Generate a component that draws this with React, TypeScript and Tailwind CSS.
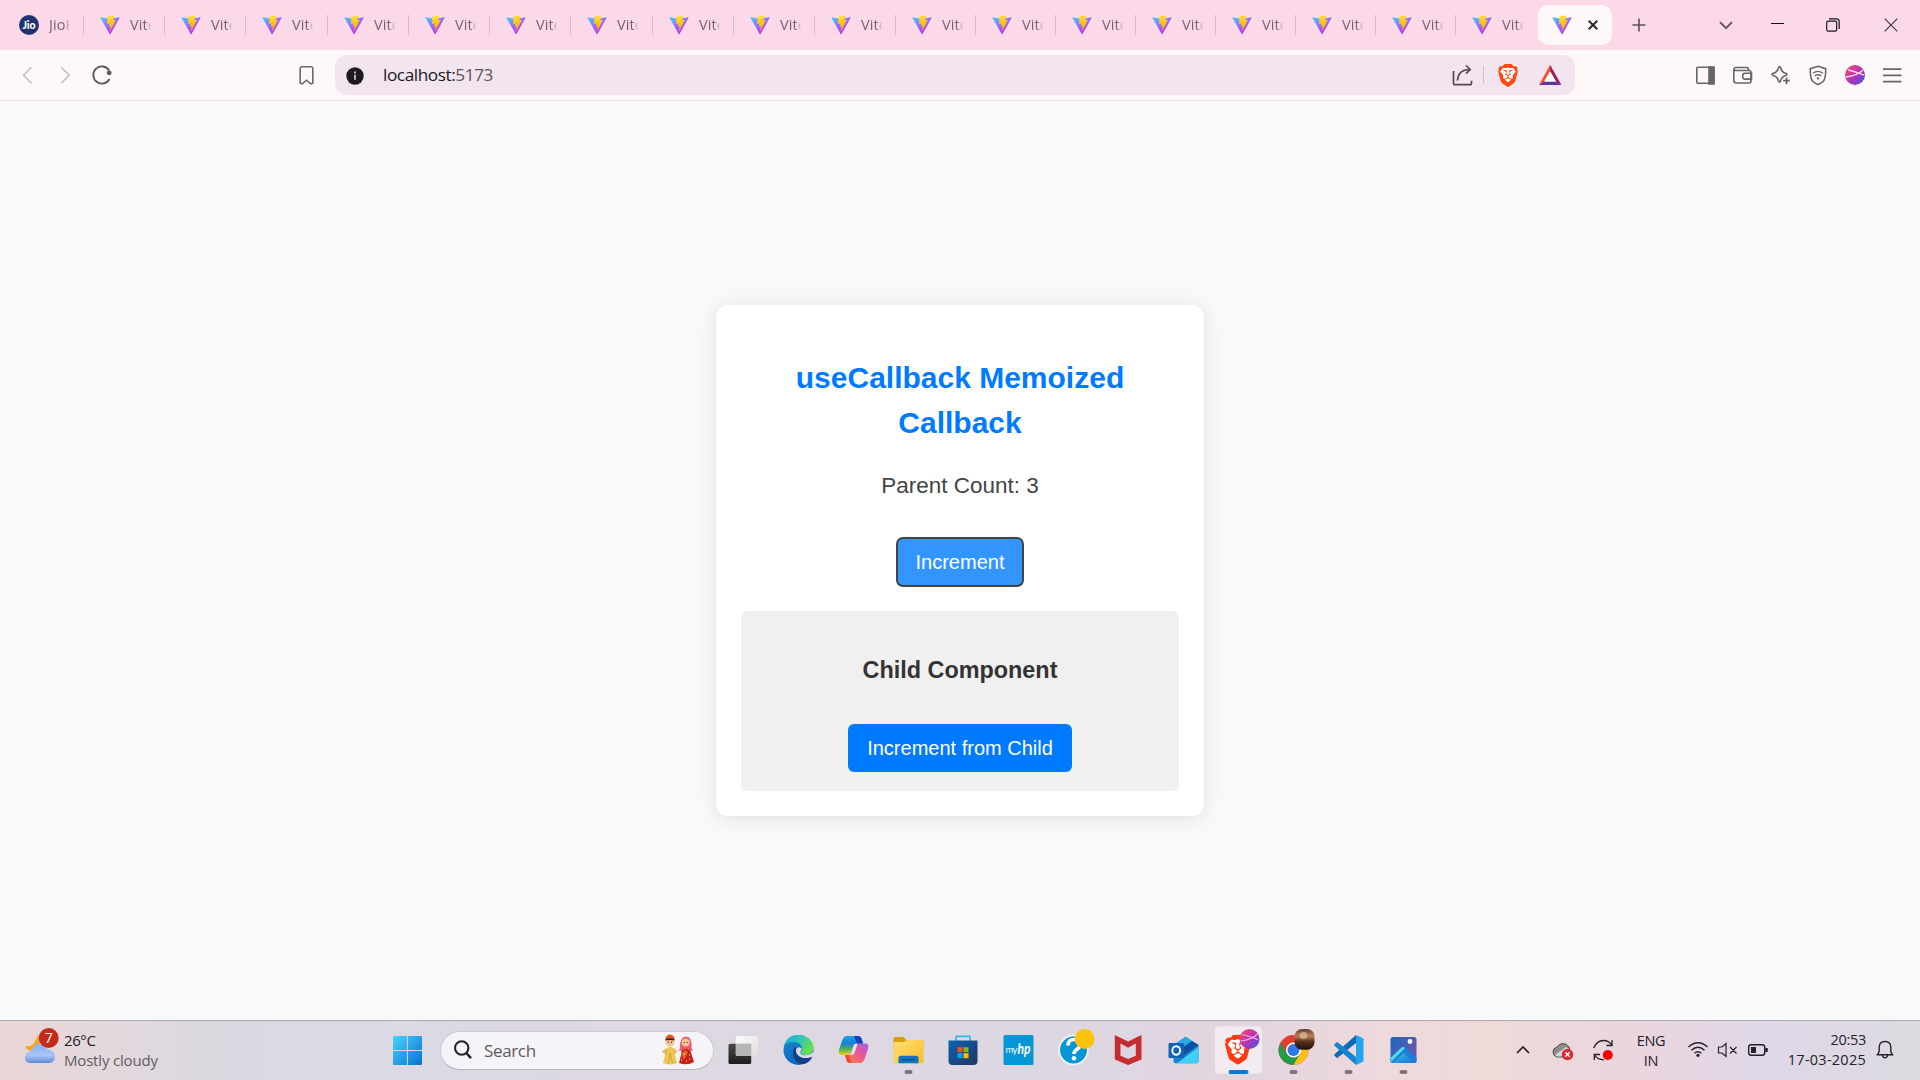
import React from "react";
import { SiBrave } from "react-icons/si";

const ui = "font-['Open_Sans','Noto_Sans',sans-serif]";

function Gradients() {
  return (
    <svg width="0" height="0" className="absolute">
      <defs>
        <linearGradient id="viteA" x1="6" y1="33" x2="235" y2="344" gradientUnits="userSpaceOnUse">
          <stop stopColor="#41D1FF" />
          <stop offset="1" stopColor="#BD34FE" />
        </linearGradient>
        <linearGradient id="viteB" x1="194.651" y1="8.818" x2="236.076" y2="292.989" gradientUnits="userSpaceOnUse">
          <stop stopColor="#FFEA83" />
          <stop offset=".083" stopColor="#FFDD35" />
          <stop offset="1" stopColor="#FFA800" />
        </linearGradient>
        <linearGradient id="orb" x1="0" y1="0" x2="1" y2="1">
          <stop stopColor="#ff4c5c" />
          <stop offset=".5" stopColor="#b933b5" />
          <stop offset="1" stopColor="#3b54e6" />
        </linearGradient>
      </defs>
    </svg>
  );
}

function Vite() {
  return (
    <svg width="20" height="20" viewBox="0 0 410 404" className="shrink-0">
      <path fill="url(#viteA)" d="M399.641 59.5246L215.643 388.545C211.844 395.338 202.084 395.378 198.228 388.618L10.5817 59.5563C6.38087 52.1896 12.6802 43.2665 21.0281 44.7586L205.223 77.6824C206.398 77.8924 207.601 77.8904 208.776 77.6763L389.119 44.8058C397.439 43.2894 403.768 52.1434 399.641 59.5246Z" />
      <path fill="url(#viteB)" d="M292.965 1.5744L156.801 28.2552C154.563 28.6937 152.906 30.5903 152.771 32.8664L144.395 174.33C144.198 177.662 147.258 180.248 150.51 179.498L188.42 170.749C191.967 169.931 195.172 173.055 194.443 176.622L183.18 231.775C182.422 235.487 185.907 238.661 189.532 237.56L212.947 230.446C216.577 229.344 220.065 232.527 219.297 236.242L201.398 322.875C200.278 328.294 207.486 331.249 210.492 326.603L212.5 323.5L323.454 102.072C325.312 98.3645 322.108 94.137 318.036 94.9228L279.014 102.454C275.347 103.161 272.227 99.746 273.262 96.1583L298.731 7.86689C299.767 4.27314 296.636 0.855181 292.965 1.5744Z" />
    </svg>
  );
}

const tabWidths = [81, 81, 81, 82, 81, 81, 81, 82, 81, 81, 81, 80, 80, 80, 80, 80, 80, 80, 82];

function TabStrip() {
  return (
    <div className={`flex h-[50px] items-center bg-[#fbd9e9] pl-[3px] ${ui}`}>
      {tabWidths.map((w, i) => (
        <div key={i} style={{ width: w }} className="flex h-5 shrink-0 items-center pl-4">
          {i === 0 ? (
            <div className="flex size-5 shrink-0 items-center justify-center rounded-full bg-[#20326f] font-['Lato',sans-serif] text-[10.5px] font-black text-white">
              <span className="leading-none">Jio</span>
            </div>
          ) : (
            <Vite />
          )}
          <div className="ml-[10px] w-[22px] overflow-hidden text-[14.5px] leading-5 tracking-[0.1px] whitespace-nowrap text-[#75646e] [mask-image:linear-gradient(to_right,#000_68%,transparent_98%)]">
            {i === 0 ? "JioH" : "Vite"}
          </div>
          {i < 18 && <div className="ml-auto h-5 w-px bg-[#d8bccb]" />}
        </div>
      ))}
      <div className="flex h-10 w-[74px] shrink-0 items-center rounded-[10px] bg-[#fff8f9] pl-[14px]">
        <Vite />
        <svg width="12" height="12" viewBox="0 0 12 12" className="ml-[14.5px]">
          <path d="M1.7 1.7l8.6 8.6M10.3 1.7l-8.6 8.6" stroke="#2c2a2e" strokeWidth="2" />
        </svg>
      </div>
      <svg width="14" height="14" viewBox="0 0 14 14" className="ml-[20px] shrink-0">
        <path d="M7 .5v13M.5 7h13" stroke="#5c5057" strokeWidth="1.6" />
      </svg>
      <svg width="14" height="9" viewBox="0 0 14 9" className="ml-[73px] shrink-0">
        <path d="M1 1.2l6 6 6-6" fill="none" stroke="#5c5459" strokeWidth="1.9" />
      </svg>
      <div className="-mt-[3px] ml-[38px] h-[1.5px] w-[13px] bg-[#111]" />
      <svg width="14" height="14" viewBox="0 0 14 14" className="ml-[42px] shrink-0" fill="none" stroke="#19161a" strokeWidth="1.2">
        <rect x=".7" y="3.2" width="10" height="10" rx="1.6" />
        <path d="M3 .8h7.2q3 0 3 3V11" />
      </svg>
      <svg width="14" height="14" viewBox="0 0 14 14" className="ml-[44px] shrink-0">
        <path d="M.7.7l12.6 12.6M13.3.7L.7 13.3" stroke="#3a3237" strokeWidth="1.1" />
      </svg>
    </div>
  );
}

function Toolbar() {
  return (
    <div className={`flex h-[51px] items-center border-b border-[#f3dde2] bg-[#fff8f8] ${ui}`}>
      <svg width="335" height="50" viewBox="0 0 335 50" fill="none" strokeWidth="1.6" className="shrink-0">
        <path d="M31.5 17.2l-8 8 8 8M61.2 17.2l8 8-8 8" stroke="#c2bdc0" />
        <path d="M109.2 20.5A8.6 8.6 0 1 0 109.5 29" stroke="#55575c" strokeWidth="1.8" />
        <circle cx="109.2" cy="22.8" r="2.4" fill="#55575c" />
        <path d="M302 16.7h9q1.8 0 1.8 1.8v14.7l-2 .6-4.3-3.6-4.3 3.6-2-.6V18.5q0-1.8 1.8-1.8z" stroke="#676a70" />
      </svg>
      <div className="flex h-10 w-[1240px] shrink-0 items-center rounded-[12px] bg-[#f2e5ef] pl-[11px]">
        <svg width="18" height="18" viewBox="0 0 18 18" className="mt-[2px]">
          <circle cx="9" cy="9" r="8.7" fill="#1f1a1e" />
          <path d="M9 7.8v5M9 4.6v1.8" stroke="#d9ced6" strokeWidth="1.7" />
        </svg>
        <div className="ml-[19px] text-[17.2px] leading-10 tracking-[-0.42px] text-[#201a1e]">
          localhost:<span className="text-[#5d535b]">5173</span>
        </div>
        <svg width="130" height="40" viewBox="0 0 130 40" fill="none" className="ml-auto">
          <g stroke="#55484f" strokeWidth="1.7">
            <path d="M8.5 16v12q0 1.7 1.7 1.7h14.6q1.7 0 1.7-1.7v-2.3" />
            <path d="M12.500 25.5c.5-7.5 4-11 12-11M21 10.5l4.200 4-4.200 4.200" />
          </g>
          <path d="M38.500 11v18" stroke="#cdbfc9" />
          <g transform="translate(53 9)">
            <path d="M3 2h14l2 5-3 12-6 3.500L4 19 1 7z" fill="#fff" />
            <SiBrave x={-1.5} y={0} width={23} height={23} size={23} color="#fb4b12" />
          </g>
          <path d="M105.100 9.800L94 30l5-3 6.100-10.800z" fill="#ff4b2b" />
          <path d="M105.100 9.800L116.400 30l-5-3-6.300-10.800z" fill="#9c1f63" />
          <path d="M94 30h22.400l-5-3.500H99z" fill="#63329a" />
          <path d="M105.100 16.200l5.700 10.300H99.300z" fill="#fff" />
        </svg>
      </div>
      <svg width="345" height="50" viewBox="0 0 345 50" fill="none" stroke="#63666b" strokeWidth="1.6" className="shrink-0">
        <rect x="121.800" y="17.300" width="17" height="16" rx="1" />
        <path d="M134 17h5v17h-5z" fill="#63666b" />
        <path d="M174 20.500h-14.500q-1.200-3 1.500-3h10.500q2.300 0 2.300 3zM174 20.500q2 0 2 2v8.500q0 2-2 2h-12.500q-2.700 0-2.700-2.700V19" />
        <path d="M176.500 23.300H170q-2.300 0-2.300 2.300v1.200q0 2.300 2.300 2.300h6.500z" />
        <path d="M204.500 16.500q.8 0 1 1 1 4.800 5.800 6 1.700.8 0 1.700-4.800 1.200-5.800 6-.9 1.900-1.900 0-1-4.800-5.800-6-1.900-.9 0-1.700 4.800-1.200 5.800-6 .2-1 .9-1z" />
        <path d="M211.500 27.500v6.500M208.200 30.700h6.600" strokeWidth="1.800" />
        <path d="M243 16.300l7.700 2.400q.3 10-2.600 12.800-2 1.800-5.100 3-3.100-1.200-5.100-3-2.900-2.800-2.600-12.800z" />
        <path d="M238 23.200q5-3.600 10 0M239.700 26q3.300-2.500 6.600 0" strokeWidth="1.400" />
        <circle cx="243" cy="28.400" r=".8" fill="#63666b" strokeWidth="1" />
        <circle cx="280" cy="25" r="10" fill="url(#orb)" stroke="none" />
        <path d="M271 27c8-1 14-4 17-7M273 20c6 1 12 4 16 5" stroke="#ffd7ec" strokeWidth="1.300" />
        <path d="M308 19.200h18.500M308 25.300h18.500M308 31.700h18.500" strokeWidth="1.700" />
      </svg>
    </div>
  );
}

function Card() {
  return (
    <div className="flex h-[919px] justify-center bg-[#f8f9fb] pt-[204px] font-['Liberation_Sans',Arial,sans-serif]">
      <div className="h-[511px] w-[488px] rounded-[12px] bg-white px-[25px] pt-[50px] text-center shadow-[0_2px_19px_rgba(0,0,0,0.1)]">
        <h2 className="text-[30px] leading-[45px] font-bold text-[#007bff]">
          useCallback Memoized
          <br />
          Callback
        </h2>
        <p className="mt-[24px] text-[22.5px] leading-[34px] text-[#444]">Parent Count: 3</p>
        <button className="mx-auto mt-[34px] block h-[50px] w-[128px] rounded-[7px] border-2 border-[#444] bg-[#3395ff] text-[20px] text-white">
          Increment
        </button>
        <div className="mt-[24px] h-[180px] rounded-[6px] bg-[#f0f0f0] pt-[42px]">
          <h3 className="text-[23.4px] leading-[35px] font-bold text-[#333]">Child Component</h3>
          <button className="mx-auto mt-[36px] block h-12 w-[224px] rounded-[6px] bg-[#007bff] text-[20px] text-white">
            Increment from Child
          </button>
        </div>
      </div>
    </div>
  );
}

function Slot({ children }: { children: React.ReactNode }) {
  return (
    <svg width="55" height="60" viewBox="0 0 55 60" className="shrink-0">
      {children}
    </svg>
  );
}

const dot = <rect x="23.500" y="50" width="8" height="4" rx="2" fill="#7d777d" />;

function Apps() {
  return (
    <div className="ml-[2.5px] flex">
      <Slot>
        <defs>
          <linearGradient id="tvA" x1="0" y1="0" x2="0" y2="1"><stop stopColor="#4a4a48" /><stop offset="1" stopColor="#1d1d1b" /></linearGradient>
          <linearGradient id="tvB" x1="0" y1="0" x2="1" y2="1"><stop stopColor="#fff" /><stop offset="1" stopColor="#dedede" /></linearGradient>
        </defs>
        <rect x="12.500" y="23.700" width="22.700" height="20.300" rx="1.500" fill="url(#tvA)" />
        <rect x="19.800" y="16" width="22.400" height="20" rx="1.500" fill="url(#tvB)" fillOpacity=".9" />
        <path d="M19.800 23.700h15.400V36h-14q-1.400 0-1.400-1.400z" fill="#b5b5b5" />
      </Slot>
      <Slot>
        <defs>
          <linearGradient id="edA" x1="0" y1="0" x2="1" y2=".4"><stop stopColor="#1ea6d8" /><stop offset=".5" stopColor="#2cc3c0" /><stop offset="1" stopColor="#66e04f" /></linearGradient>
          <linearGradient id="edB" x1="0" y1="0" x2=".5" y2="1"><stop stopColor="#1489cf" /><stop offset="1" stopColor="#0e66bd" /></linearGradient>
        </defs>
        <circle cx="27.500" cy="30" r="15" fill="url(#edB)" />
        <path d="M13 26C15 18 21 15 27.500 15c8.500 0 15 6 15 12.500 0 5-4 7.500-8 7.500-3.500 0-5-1.500-5-2.500s1.500-1.500 1.500-4c0-4-4-6.500-8.500-6.500-4 0-7.500 1.500-9.500 4z" fill="url(#edA)" />
        <path d="M23.500 27c-4 5-.5 17.500 9 17 3.500-.5 7-3.500 8.500-6.500.3-.8-.3-1-.9-.7-8 4-17-1-14.300-8z" fill="#123f86" />
        <path d="M25 29.500c1-2.500 4-3 5.500-1-.2 2.200-1.300 3-1.300 4 0 1.500 2 2.700 5 2.700 3.500 0 6.500-1.200 8.300-4.200v5c-8 4.500-18 1.500-17.500-6.500z" fill="#dcd7e2" />
        <path d="M40.500 37c1-.6 1.600-1.800 2-3v5z" fill="#dcd7e2" />
      </Slot>
      <Slot>
        <defs>
          <linearGradient id="coA" x1="0" y1="0" x2="0" y2="1"><stop stopColor="#1ba3e8" /><stop offset=".4" stopColor="#1b7fd6" /><stop offset=".7" stopColor="#52b455" /><stop offset="1" stopColor="#f0cf1c" /></linearGradient>
          <linearGradient id="coB" x1="1" y1="0" x2="0" y2="1"><stop stopColor="#a55af0" /><stop offset=".5" stopColor="#ed5a8c" /><stop offset="1" stopColor="#fb8a2f" /></linearGradient>
        </defs>
        <path d="M21 16h11q3 0 4 4l1 3.500h-6q-3 0-4 3.500l-2 5q-1 3-4 3h-5q-4.500 0-3-5.500l3.500-10Q17.800 16 21 16z" fill="url(#coA)" />
        <path d="M34 43H24q-3 0-4-4l-1-4h3q3 0 4-3l2-5q1-3.500 4-3.500h7q4.500 0 3 5.500l-3.500 10Q37.200 43 34 43z" fill="url(#coB)" />
        <path d="M28 16h4q3 0 4 4l1 3.500h-6z" fill="#1740b8" />
        <path d="M28.500 24h3l-3 9-1.500 2h-4q2.500 0 3.500-3.500z" fill="#ece4ee" />
        <path d="M19 35h4l3 8h-2q-3 0-4-4z" fill="#ef4b35" />
      </Slot>
      <Slot>
        <defs>
          <linearGradient id="fo" x1="0" y1="0" x2="1" y2="1"><stop stopColor="#ffe07a" /><stop offset="1" stopColor="#fbbd22" /></linearGradient>
        </defs>
        <path d="M12.500 18.500q0-1.500 1.500-1.500h8l3.500 3h15.500q1.500 0 1.500 1.500V30h-30z" fill="#dd9d05" />
        <path d="M12.500 23q0-1 1-1H23l3-2h15.500q1 0 1 1v22.300h-30z" fill="url(#fo)" />
        <path d="M17.500 43.300v-5q0-2.500 2.500-2.500h15q2.500 0 2.500 2.500v5z" fill="#1174c2" />
        <path d="M21 39.700h13" stroke="#0b4a86" strokeWidth="1.300" />
        {dot}
      </Slot>
      <Slot>
        <defs>
          <linearGradient id="st" x1="0" y1="0" x2="1" y2="1"><stop stopColor="#0b64b5" /><stop offset="1" stopColor="#24345f" /></linearGradient>
        </defs>
        <path d="M20 21v-4q0-.6.6-.6h12.800q.6 0 .6.6v4" fill="none" stroke="#2cb9f0" strokeWidth="1.700" />
        <path d="M12.500 20.500h29V41q0 4-4 4h-21q-4 0-4-4z" fill="url(#st)" />
        <path d="M21.500 27.200h5v5h-5z" fill="#f25022" /><path d="M27.500 27.200h5v5h-5z" fill="#7fba00" />
        <path d="M21.500 33.200h5v5h-5z" fill="#00a4ef" /><path d="M27.500 33.200h5v5h-5z" fill="#ffb900" />
      </Slot>
      <Slot>
        <rect x="12.500" y="15" width="30" height="30" rx="1.500" fill="#0496d6" />
        <text x="14.500" y="33" fontSize="9.500" fill="#fff" fontFamily="Lato, sans-serif" textLength="12">my</text>
        <text x="26.500" y="34" fontSize="15" fontStyle="italic" fontWeight="bold" fill="#fff" fontFamily="Lato, sans-serif" textLength="13" lengthAdjust="spacingAndGlyphs">hp</text>
      </Slot>
      <Slot>
        <circle cx="27.500" cy="30" r="14.300" fill="#0496d6" stroke="#f5f3f8" strokeWidth="1.700" />
        <path d="M22 25.500q0-6 6-6t6 5q0 3-3.200 5-2.800 1.700-2.800 4.500" fill="none" stroke="#fff" strokeWidth="3.600" />
        <circle cx="28" cy="38.300" r="2.300" fill="#fff" />
        <circle cx="38.700" cy="19" r="10" fill="#ffc20e" />
      </Slot>
      <Slot>
        <path d="M13.800 15l13.300 6.500L40.500 15v24.500L27.100 45l-13.300-5.500z" fill="#c52e31" />
        <path d="M19.500 23.500l7.600 4.200 7.700-4.200v12.300L27.100 39l-7.600-3.200z" fill="#ddd6e1" />
      </Slot>
      <Slot>
        <path d="M17.500 25l12-8.300L42.500 25v16q0 2.300-2.300 2.300h-20q-2.700 0-2.700-2.600z" fill="#1683cf" />
        <path d="M29.500 16.700L36 21l-12 8-6.500-4z" fill="#2aa9e6" />
        <path d="M36 21l6.500 4-14 10-6-4z" fill="#0b4f9e" />
        <path d="M42.500 27v14q0 2.300-2.300 2.300H21z" fill="#3fd0f5" />
        <rect x="12.500" y="23" width="15.500" height="15" rx="1" fill="#1163b5" />
        <ellipse cx="20.200" cy="30.500" rx="3.900" ry="4.200" fill="none" stroke="#fff" strokeWidth="2" />
      </Slot>
      <Slot>
        <rect x="3.500" y="6" width="48" height="48" rx="4" fill="#f2ebf0" stroke="#e0d5dc" strokeWidth=".7" />
        <path d="M18 18h18l2 6-4 15-7.500 5L20 39l-4-15z" fill="#fff" />
        <SiBrave x={11.8} y={14.7} width={30} height={30} size={30} color="#fb3c10" />
        <circle cx="38.500" cy="19" r="10" fill="url(#orb)" />
        <path d="M29.500 21c8-1 14-4 17-7M31 14.500c6 1 12 4 16 5" fill="none" stroke="#f3a9dd" strokeWidth="1.200" />
        <rect x="17.500" y="50" width="20" height="4" rx="2" fill="#0a78d4" />
      </Slot>
      <Slot>
        <defs>
          <linearGradient id="face" x1="0" y1="0" x2="0" y2="1"><stop stopColor="#6b4128" /><stop offset=".35" stopColor="#b98058" /><stop offset=".6" stopColor="#5b3120" /><stop offset="1" stopColor="#20110f" /></linearGradient>
        </defs>
        <circle cx="27.500" cy="30" r="15" fill="#e33b2e" />
        <path d="M14.510 22.500A15 15 0 0 0 27.500 45l6.500-11.250L21 33.750z" fill="#279847" />
        <path d="M40.490 22.500A15 15 0 0 1 27.500 45L34 33.750 27.500 22.500z" fill="#fbc116" />
        <circle cx="27.500" cy="30" r="7.500" fill="#fff" />
        <circle cx="27.500" cy="30" r="6" fill="#2f78e8" />
        <rect x="28.500" y="9" width="20" height="20.700" rx="7.500" fill="url(#face)" />
        <ellipse cx="37.500" cy="15.500" rx="4" ry="3.500" fill="#f0cba8" fillOpacity=".6" />
        {dot}
      </Slot>
      <Slot>
        <path d="M35 15v8L17 37.500q-.8.7-1.700 0l-1.800-1.700q-.8-.8 0-1.600z" fill="#0e6cb4" />
        <path d="M35 45v-8L17 22.500q-.8-.7-1.700 0l-1.800 1.700q-.8.8 0 1.600z" fill="#1484cf" />
        <path d="M35 15l6.500 3q1 .5 1 1.600v20.800q0 1.100-1 1.600L35 45z" fill="#26a2ee" />
        {dot}
      </Slot>
      <Slot>
        <defs>
          <linearGradient id="ph" x1="0" y1="0" x2="1" y2=".8"><stop stopColor="#1769bd" /><stop offset="1" stopColor="#7852a9" /></linearGradient>
          <linearGradient id="phm" x1="0" y1="0" x2="1" y2="1"><stop stopColor="#45d8f6" /><stop offset="1" stopColor="#1677d2" /></linearGradient>
        </defs>
        <rect x="14.500" y="17" width="26" height="26" rx="2.500" fill="url(#ph)" />
        <path d="M14.500 38l10.700-10.500q2.300-2 4.600 0L40.500 38v2.500q0 2.500-2.500 2.500H17q-2.500 0-2.500-2.500z" fill="#1c7ed6" />
        <path d="M15 42l14-14q-2-2-4 0L14.500 38v2.500z" fill="#4bdcf8" />
        <path d="M17 43l10.500-10 10 10z" fill="url(#phm)" fillOpacity=".7" />
        <circle cx="34" cy="21.500" r="2.400" fill="#fff" />
        {dot}
      </Slot>
    </div>
  );
}

function Couple() {
  return (
    <svg width="34" height="32" viewBox="0 0 34 32">
      <path d="M5.500 14q3.500-2 7 0l1 5 2.500 10q-7 3-14 0l2.500-10z" fill="#ecc957" />
      <path d="M5 14L1.500 17.500l3 3 2-2.500M13 14l3 3-2 3.500-2.500-2.500" fill="#e8b54a" />
      <path d="M9 19l-1.500 11M9 19l2.500 10" stroke="#cf9a30" strokeWidth=".8" fill="none" />
      <circle cx="2.500" cy="17.500" r="1.300" fill="#f3b98a" /><circle cx="15" cy="17.500" r="1.300" fill="#f3b98a" />
      <circle cx="9" cy="8" r="4.500" fill="#f6c298" />
      <path d="M4.500 5q0-4 4.500-4.500Q13.500 1 13.500 5z" fill="#e0591c" />
      <path d="M4.500 5.800q4.500-1.300 9 0" fill="none" stroke="#3a2016" strokeWidth="1.600" />
      <path d="M20 14q5-3 9 0l1 5 3 9q-7 4-15 1l2.500-10z" fill="#c91c1c" />
      <path d="M19 14q-.5-11.500 6-11.500T30.500 14l1.500 3-4-1q-3-2-6 0l-4 1z" fill="#ea5a68" />
      <circle cx="24.700" cy="8.500" r="4" fill="#f6c298" />
      <path d="M20 20l4-4 3 2-4 8z" fill="#e2671e" />
      <path d="M20 26h1M25 27h1M28 21h1M23 20h1M28 25h1" stroke="#f7c94b" strokeWidth="1.300" />
      <path d="M7 8.300h1M10 8.300h1M22.800 8.500h1M25.800 8.500h1" stroke="#3a2016" />
    </svg>
  );
}

function Taskbar() {
  return (
    <div
      className={`flex h-[60px] shrink-0 border-t border-[#aeaab2] bg-[linear-gradient(to_right,#ebd6d6_0px,#e3d8dc_90px,#dcd8e0_200px,#dad9e4_400px,#ddd8e2_600px,#ddd7e2_1080px,#e3d5df_1260px,#eed9dc_1380px,#eedad9_1500px,#e8d5df_1660px,#dfd8e8_1760px,#dcd9e0_1920px)] ${ui}`}
    >
      <div className="-mt-px flex w-[380px] shrink-0">
        <svg width="64" height="60" viewBox="0 0 64 60" className="shrink-0">
          <defs>
            <linearGradient id="cl" x1="0" y1="0" x2="0" y2="1"><stop stopColor="#86b2f0" /><stop offset=".6" stopColor="#a9c5f4" /><stop offset="1" stopColor="#6588dc" /></linearGradient>
          </defs>
          <path d="M38 14q4 11-2 17l-4 0q-5 0-7-5 6 1 9-3t4-9z" fill="#f4a71c" />
          <path d="M31 43q-6 0-6-5.500t6-6Q33 24 39.500 24t8 5.500Q55 30 55 36.500T49 43z" fill="url(#cl)" />
          <circle cx="48.700" cy="18" r="10" fill="#c42b1c" />
          <text x="48.700" y="23" fontSize="14" fill="#fff" textAnchor="middle">7</text>
        </svg>
        <div className="pt-[10px] text-[15px] leading-5 tracking-[-0.18px]">
          <div className="tracking-[-0.4px] text-[#1e1a1e]">26°C</div>
          <div className="text-[#645c63]">Mostly cloudy</div>
        </div>
      </div>
      <div className="-mt-px flex items-center">
        <svg width="55" height="60" viewBox="0 0 55 60">
          <defs>
            <linearGradient id="win" x1="13" y1="16" x2="42" y2="45" gradientUnits="userSpaceOnUse"><stop stopColor="#4cd0fb" /><stop offset="1" stopColor="#0573d2" /></linearGradient>
          </defs>
          <path d="M14 16h12.900v13.900H13V17q0-1 1-1zM27.900 16H41q1 0 1 1v12.900H27.900zM13 30.900h13.900V45H14q-1 0-1-1zM27.900 30.900H42V44q0 1-1 1H27.900z" fill="url(#win)" />
        </svg>
        <div className="ml-[4.5px] flex h-[39px] w-[274px] items-center rounded-full border border-[#cdc8d3] border-b-[#b8b4bf] bg-[#f5f4f8] pl-[12.5px]">
          <svg width="20" height="20" viewBox="0 0 20 20" fill="none" stroke="#28252a" strokeWidth="2.100">
            <circle cx="8.700" cy="8" r="6.700" />
            <path d="M13.300 13l4.700 5.200" strokeWidth="2.600" />
          </svg>
          <span className="mt-[2px] ml-[11px] text-[17px] tracking-[-0.35px] text-[#5d5a5f]">Search</span>
          <div className="mr-[18px] ml-auto"><Couple /></div>
        </div>
        <Apps />
      </div>
      <div className="-mt-px ml-[79px] flex text-[14.5px] leading-5 tracking-[-0.3px] text-[#262227]">
        <svg width="110" height="60" viewBox="1510 0 110 60" fill="none" className="shrink-0">
          <path d="M1517 33l6-6 6 6" stroke="#242024" strokeWidth="1.700" />
          <path d="M1557 37q-4-1-4-5 0-4 4-5 2-3.500 6-3.500t6 3.500 1 10z" fill="#8c8d8c" stroke="#4e4e4e" />
          <path d="M1555 35l11-8 3 2-8 7.500h-4z" fill="#d8d8d8" />
          <circle cx="1567.500" cy="34.500" r="5.700" fill="#d92b36" />
          <path d="M1565.300 32.300l4.400 4.400M1569.700 32.300l-4.400 4.400" stroke="#fff" strokeWidth="1.300" />
          <path d="M1593.700 28q3-7.500 10-7.500 5 0 8 4.500M1612 20v5.500h-5.500M1600 34.500h-5.700v5.500M1594.500 35q2.500 4.500 9.500 4.800" stroke="#252126" strokeWidth="1.300" />
          <circle cx="1607.800" cy="35" r="5" fill="#f60000" />
        </svg>
        <div className="w-[62px] pt-[10.5px] text-center">
          ENG
          <br />
          IN
        </div>
        <svg width="98" height="60" viewBox="1682 0 98 60" fill="none" stroke="#252126" strokeWidth="1.400" className="shrink-0">
          <path d="M1688.500 27q9.500-8.500 19 0M1691.500 30.300q6.500-6 13 0M1694.500 33.300q3.500-3 7 0" />
          <circle cx="1698" cy="35.300" r="1.600" fill="#252126" stroke="none" />
          <path d="M1718.500 27h3.500l4-3.500v13l-4-3.500h-3.500zM1730 27l6.500 6.500M1736.500 27l-6.500 6.500" strokeWidth="1.200" />
          <rect x="1748.700" y="24.700" width="16" height="10.600" rx="2.500" />
          <rect x="1751" y="27" width="5" height="6" fill="#252126" stroke="none" />
          <path d="M1766.500 28v4" strokeWidth="2.500" />
        </svg>
        <div className="w-[86px] pt-[10px] text-right text-[#262227]">
          20:53
          <br />
          <span className="tracking-[0.25px]">17-03-2025</span>
        </div>
        <svg width="30" height="60" viewBox="1870 0 30 60" fill="none" stroke="#252126" strokeWidth="1.400" className="ml-[4px]">
          <path d="M1877.500 34.700l1.700-3.200v-4.200q0-5.800 5.800-5.800t5.800 5.800v4.200l1.700 3.200zM1882.300 35q.5 2.800 2.700 2.800t2.700-2.800" />
        </svg>
      </div>
    </div>
  );
}

export default function App() {
  return (
    <div className="flex h-[1080px] w-[1920px] flex-col overflow-hidden">
      <Gradients />
      <TabStrip />
      <Toolbar />
      <Card />
      <Taskbar />
    </div>
  );
}
